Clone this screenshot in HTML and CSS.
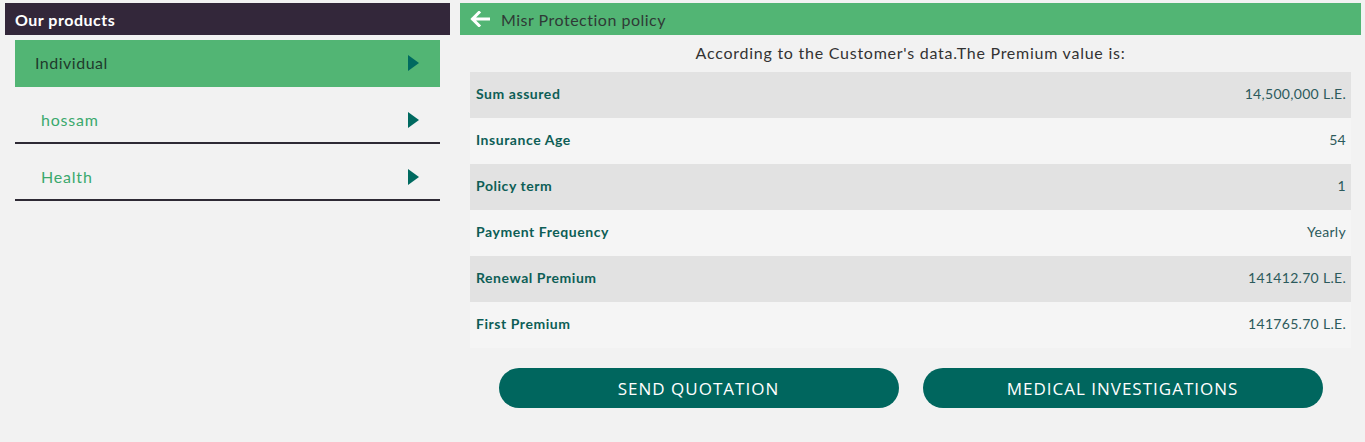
FILE: index.html
```html
<!DOCTYPE html>
<html>
<head>
<meta charset="utf-8">
<link rel="stylesheet" href="styles.css">
</head>
<body>
<div class="page">
  <aside class="sidebar">
    <div class="side-head">Our products</div>
    <ul class="products">
      <li class="product active"><span>Individual</span><i class="tri"></i></li>
      <li class="product"><span>hossam</span><i class="tri"></i></li>
      <li class="product"><span>Health</span><i class="tri"></i></li>
    </ul>
  </aside>
  <main class="content">
    <div class="main-head">
      <svg class="back" width="20" height="16" viewBox="0 0 20 16"><path d="M19 8H3M9 1.5L2.5 8 9 14.5" fill="none" stroke="#fff" stroke-width="3" stroke-linecap="square"/></svg>
      <span>Misr Protection policy</span>
    </div>
    <p class="intro">According to the Customer's data.The Premium value is:</p>
    <div class="table">
      <div class="row"><span class="label">Sum assured</span><span class="val">14,500,000 L.E.</span></div>
      <div class="row"><span class="label">Insurance Age</span><span class="val">54</span></div>
      <div class="row"><span class="label">Policy term</span><span class="val">1</span></div>
      <div class="row"><span class="label">Payment Frequency</span><span class="val">Yearly</span></div>
      <div class="row"><span class="label">Renewal Premium</span><span class="val">141412.70 L.E.</span></div>
      <div class="row"><span class="label">First Premium</span><span class="val">141765.70 L.E.</span></div>
    </div>
    <div class="actions">
      <button class="btn">SEND QUOTATION</button>
      <button class="btn">MEDICAL INVESTIGATIONS</button>
    </div>
  </main>
</div>
</body>
</html>
```
FILE: styles.css
```css
html, body { margin: 0; padding: 0; }
body {
  background: #f2f2f2;
  font-family: Lato, "Noto Sans", sans-serif;
  width: 1365px;
  height: 442px;
  overflow: hidden;
}
.page {
  display: flex;
  gap: 10px;
  padding: 3px 4px 0 5px;
}
.sidebar { width: 445px; flex: none; }
.side-head {
  height: 32px;
  background: #33273a;
  color: #fff;
  font-size: 16px;
  font-weight: 700;
  letter-spacing: 0.5px;
  display: flex;
  align-items: center;
  padding: 0 0 0 10px;
  box-sizing: border-box;
}
.products { list-style: none; margin: 5px 10px 0; padding: 0; }
.product {
  display: flex;
  align-items: center;
  justify-content: space-between;
  padding: 10px 21px 0 26px;
  box-sizing: border-box;
  border-bottom: 2px solid #2e2a35;
  height: 57px;
  color: #3aa96d;
  font-size: 16px;
  letter-spacing: 0.8px;
}
.product.active {
  height: 47px;
  padding: 0 21px 2px 20px;
  background: #52b574;
  border-bottom: none;
  color: #1f3a2c;
  letter-spacing: 0.5px;
}
.tri {
  width: 0; height: 0;
  border-top: 8px solid transparent;
  border-bottom: 8px solid transparent;
  border-left: 11px solid #006a60;
}
.content { flex: 1; display: flex; flex-direction: column; }
.main-head {
  height: 32px;
  background: #52b574;
  display: flex;
  align-items: center;
  gap: 11px;
  padding: 1px 0 0 10px;
  box-sizing: border-box;
  color: #2f3a36;
  font-size: 16px;
  letter-spacing: 0.5px;
}
.back { flex: none; margin-top: -2px; }
.intro {
  margin: 0;
  height: 37px;
  display: flex;
  align-items: center;
  justify-content: center;
  padding-bottom: 3px;
  box-sizing: border-box;
  font-size: 16px;
  letter-spacing: 0.75px;
  color: #333;
}
.table { margin: 0 10px; }
.row {
  height: 46px;
  display: flex;
  align-items: center;
  justify-content: space-between;
  padding: 0 5px 3px 6px;
  box-sizing: border-box;
  background: #f5f5f5;
  font-size: 14px;
}
.row:nth-child(odd) { background: #e2e2e2; }
.label { font-weight: 700; color: #0d5e56; letter-spacing: 0.55px; }
.val { color: #2c5a5c; letter-spacing: 0.3px; }
.actions {
  display: flex;
  justify-content: center;
  gap: 24px;
  margin-top: 20px;
}
.btn {
  width: 400px;
  height: 40px;
  border: none;
  border-radius: 20px;
  background: #00665e;
  color: #fff;
  font-family: "Open Sans", sans-serif;
  font-size: 17px;
  letter-spacing: 1px;
  padding: 0;
}
```
